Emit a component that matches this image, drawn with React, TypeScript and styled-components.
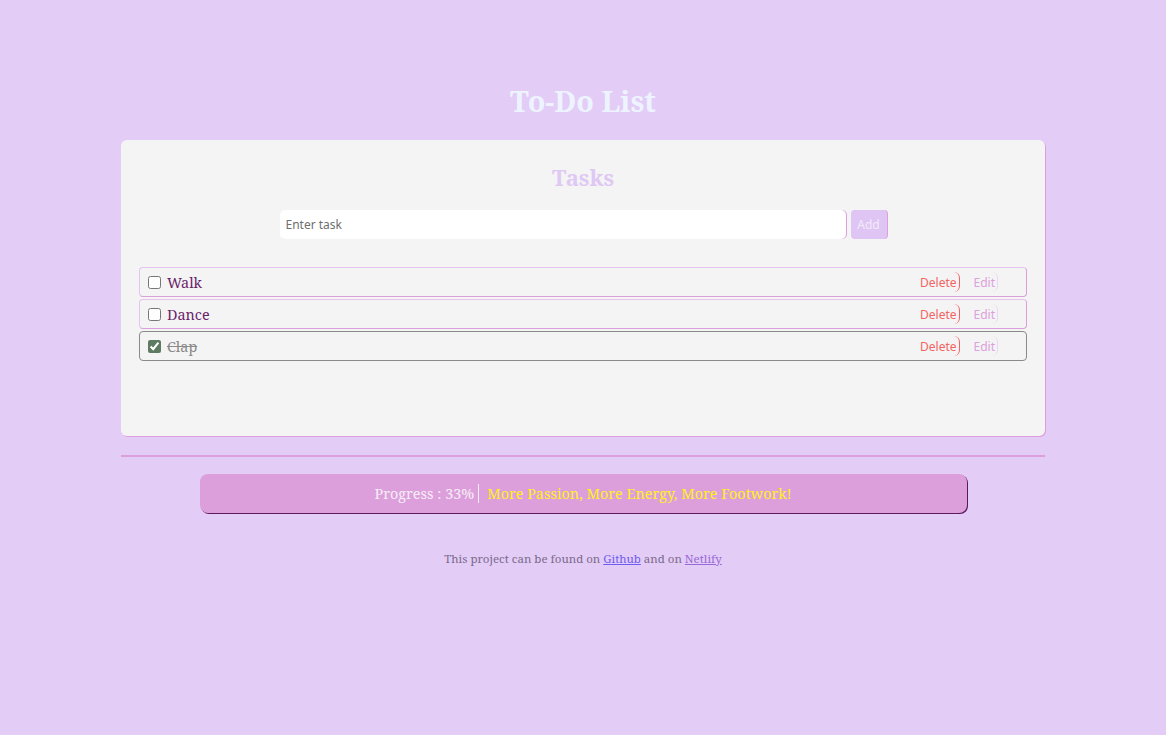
import styled, { createGlobalStyle } from 'styled-components';

const GlobalStyle = createGlobalStyle`
  body {
    margin: 0;
    background: #e3cdf7;
    font-family: "Noto Serif", "DejaVu Serif", serif;
  }
`;

type Task = { id: number; text: string; done: boolean };

const tasks: Task[] = [
  { id: 1, text: 'Walk', done: false },
  { id: 2, text: 'Dance', done: false },
  { id: 3, text: 'Clap', done: true },
];

function App() {
  const doneCount = tasks.filter((t) => t.done).length;
  const percent = Math.round((doneCount / tasks.length) * 100);

  return (
    <Page>
      <GlobalStyle />
      <Title>To-Do List</Title>

      <Card>
        <CardTitle>Tasks</CardTitle>
        <Form>
          <TaskInput placeholder="Enter task" />
          <AddButton>Add</AddButton>
        </Form>

        <List>
          {tasks.map((task) => (
            <Row key={task.id} $done={task.done}>
              <Check type="checkbox" defaultChecked={task.done} />
              <Label $done={task.done}>{task.text}</Label>
              <Actions>
                <DeleteButton>Delete</DeleteButton>
                <EditButton>Edit</EditButton>
              </Actions>
            </Row>
          ))}
        </List>
      </Card>

      <Divider />

      <Progress>
        <ProgressLabel>Progress : {percent}%</ProgressLabel>
        <Motto>More Passion, More Energy, More Footwork!</Motto>
      </Progress>

      <Footer>
        This project can be found on <GithubLink href="#">Github</GithubLink> and on{' '}
        <NetlifyLink href="#">Netlify</NetlifyLink>
      </Footer>
    </Page>
  );
}

export default App;

const Page = styled.div`
  padding-top: 79px;
  display: flex;
  flex-direction: column;
  align-items: center;
`;

const Title = styled.h1`
  margin: 0 0 18px;
  font-size: 28.8px;
  line-height: 43px;
  font-weight: 700;
  color: #eef4ff;
`;

const Card = styled.div`
  box-sizing: border-box;
  width: 924px;
  min-height: 296px;
  padding: 18px 18px 40px;
  background: #f4f4f4;
  border-radius: 6px;
  box-shadow: 1px 1px 0 #dc9fdc;
`;

const CardTitle = styled.h2`
  margin: 0 0 14px;
  text-align: center;
  font-size: 22px;
  line-height: 38px;
  font-weight: 700;
  color: #e0c8f4;
`;

const Form = styled.div`
  display: flex;
  justify-content: center;
  gap: 5px;
  margin-bottom: 28px;
`;

const TaskInput = styled.input`
  box-sizing: border-box;
  width: 566px;
  height: 29px;
  padding: 0 6px;
  border: none;
  border-radius: 5px;
  box-shadow: 1px 0 0 #dc9fdc;
  background: #ffffff;
  font-family: "Noto Sans", "Open Sans", sans-serif;
  font-size: 12px;
  outline: none;

  &::placeholder {
    color: #6f6f6f;
  }
`;

const AddButton = styled.button`
  box-sizing: border-box;
  width: 36px;
  height: 29px;
  padding: 0;
  border: none;
  border-radius: 4px;
  box-shadow: 1px 0 0 #dc9fdc;
  background: #dfc5f3;
  color: #f3eafb;
  font-family: "Noto Sans", "Open Sans", sans-serif;
  font-size: 12px;
`;

const List = styled.div`
  display: flex;
  flex-direction: column;
  gap: 2px;
`;

const Row = styled.div<{ $done: boolean }>`
  box-sizing: border-box;
  height: 30px;
  display: flex;
  align-items: center;
  padding: 0 28px 0 8px;
  border-radius: 4px;
  border: 1px solid;
  border-color: ${(p) =>
    p.$done ? '#8a8a8a' : '#e6c4f2 #dc9fdc #dc9fdc #e6c4f2'};
`;

const Check = styled.input`
  width: 13px;
  height: 13px;
  margin: 0 6px 0 0;
  accent-color: #5e7a62;
`;

const Label = styled.span<{ $done: boolean }>`
  flex: 1;
  font-size: 14.4px;
  color: ${(p) => (p.$done ? '#8a8a8a' : '#6b1e6b')};
  text-decoration: ${(p) => (p.$done ? 'line-through' : 'none')};
`;

const Actions = styled.div`
  display: flex;
  gap: 8px;
`;

const ActionButton = styled.button`
  padding: 0 2px 0 0;
  height: 20px;
  border: none;
  border-right: 1px solid;
  border-radius: 0 6px 6px 0;
  background: transparent;
  font-family: "Noto Sans", "Open Sans", sans-serif;
  font-size: 12px;
`;

const DeleteButton = styled(ActionButton)`
  color: #f26363;
  border-right-color: #f26363;
  margin-right: 6px;
`;

const EditButton = styled(ActionButton)`
  color: #dca0dc;
  border-right-color: #ead8f2;
`;

const Divider = styled.hr`
  width: 924px;
  margin: 19px 0 17px;
  border: none;
  border-top: 2px solid #dc9fdc;
`;

const Progress = styled.div`
  box-sizing: border-box;
  width: 767px;
  height: 39px;
  display: flex;
  align-items: center;
  justify-content: center;
  background: #dc9fdc;
  border-radius: 8px;
  box-shadow: 1px 1px 0 #5c1a5c;
  font-size: 14.4px;
`;

const ProgressLabel = styled.span`
  color: #f6eef6;
  padding-right: 4px;
  margin-right: 8px;
  border-right: 1px solid #f6eef6;
`;

const Motto = styled.span`
  color: #fff21a;
`;

const Footer = styled.p`
  margin: 38px 0 0;
  font-size: 11.5px;
  color: #7c6a8c;
`;

const GithubLink = styled.a`
  color: #6f5cf0;
`;

const NetlifyLink = styled.a`
  color: #9a6ad6;
`;
